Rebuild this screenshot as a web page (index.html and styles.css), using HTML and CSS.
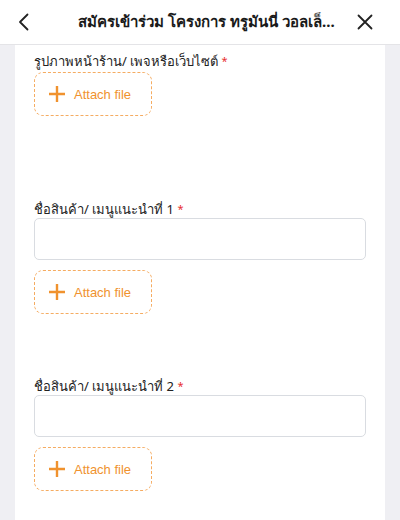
FILE: index.html
```html
<!DOCTYPE html>
<html lang="th">
<head>
<meta charset="utf-8">
<title>สมัครเข้าร่วม โครงการ ทรูมันนี่ วอลเล็ท</title>
<link rel="stylesheet" href="styles.css">
</head>
<body>
<header class="topbar">
  <button class="icon-btn back" aria-label="ย้อนกลับ">
    <svg width="12" height="18" viewBox="0 0 12 18"><polyline points="9.5,1.5 2,9 9.5,16.5" fill="none" stroke="#222" stroke-width="1.8" stroke-linecap="round" stroke-linejoin="round"/></svg>
  </button>
  <h1 class="title">สมัครเข้าร่วม โครงการ ทรูมันนี่ วอลเล็...</h1>
  <button class="icon-btn close" aria-label="ปิด">
    <svg width="16" height="16" viewBox="0 0 16 16"><path d="M1.5 1.5 L14.5 14.5 M14.5 1.5 L1.5 14.5" fill="none" stroke="#222" stroke-width="1.8" stroke-linecap="round"/></svg>
  </button>
</header>
<main class="card">
  <section class="field field-first">
    <label class="label">รูปภาพหน้าร้าน/ เพจหรือเว็บไซต์ <span class="req">*</span></label>
    <button class="attach attach-first">
      <svg class="plus" width="16" height="16" viewBox="0 0 16 16"><path d="M8 0.5 V15.5 M0.5 8 H15.5" stroke="#f0922e" stroke-width="2.4" stroke-linecap="round"/></svg>
      <span>Attach file</span>
    </button>
  </section>
  <section class="field field-second">
    <label class="label">ชื่อสินค้า/ เมนูแนะนำที่ 1 <span class="req">*</span></label>
    <input class="input" type="text">
    <button class="attach">
      <svg class="plus" width="16" height="16" viewBox="0 0 16 16"><path d="M8 0.5 V15.5 M0.5 8 H15.5" stroke="#f0922e" stroke-width="2.4" stroke-linecap="round"/></svg>
      <span>Attach file</span>
    </button>
  </section>
  <section class="field field-third">
    <label class="label">ชื่อสินค้า/ เมนูแนะนำที่ 2 <span class="req">*</span></label>
    <input class="input" type="text">
    <button class="attach">
      <svg class="plus" width="16" height="16" viewBox="0 0 16 16"><path d="M8 0.5 V15.5 M0.5 8 H15.5" stroke="#f0922e" stroke-width="2.4" stroke-linecap="round"/></svg>
      <span>Attach file</span>
    </button>
  </section>
</main>
</body>
</html>
```
FILE: styles.css
```css
* { box-sizing: border-box; }
html, body { height: 100%; }
body {
  margin: 0;
  background: #efeff3;
  font-family: "Noto Sans", "Liberation Sans", sans-serif;
  color: #222;
  display: flex;
  flex-direction: column;
}
.topbar {
  height: 45px;
  background: #fff;
  border-bottom: 1px solid #e4e4e7;
  display: flex;
  align-items: center;
  flex-shrink: 0;
}
.icon-btn {
  background: none;
  border: 0;
  padding: 0;
  display: flex;
  align-items: center;
  justify-content: flex-start;
  height: 44px;
  width: 48px;
}
.back { padding-left: 18px; }
.close { padding-left: 5px; }
.title {
  flex: 1;
  margin: 0;
  text-align: center;
  font-size: 15px;
  font-weight: 700;
  color: #1a1a1a;
  white-space: nowrap;
  overflow: hidden;
  padding-left: 13px;
}
.card {
  flex: 1;
  margin: 0 15px;
  background: #fff;
  padding: 9px 19px 0;
}
.field { display: flex; flex-direction: column; align-items: flex-start; }
.field-second { margin-top: 86px; }
.field-third { margin-top: 65px; }
.label {
  font-size: 13px;
  line-height: 14px;
  color: #222;
}
.req { color: #e8312f; font-size: 11px; vertical-align: top; }
.input {
  margin-top: 2px;
  width: 100%;
  height: 42px;
  border: 1.5px solid #d9dce1;
  border-radius: 5px;
  background: #fff;
}
.attach {
  margin-top: 10px;
  width: 118px;
  height: 44px;
  border: 1.5px dashed #f5ac62;
  border-radius: 9px;
  background: #fff;
  display: flex;
  align-items: center;
  padding: 0 0 0 14px;
  gap: 9px;
  color: #f0922e;
  font-family: "Liberation Sans", "Noto Sans", sans-serif;
  font-size: 13px;
}
.attach-first { margin-top: 4px; }
.plus { flex-shrink: 0; }
```
